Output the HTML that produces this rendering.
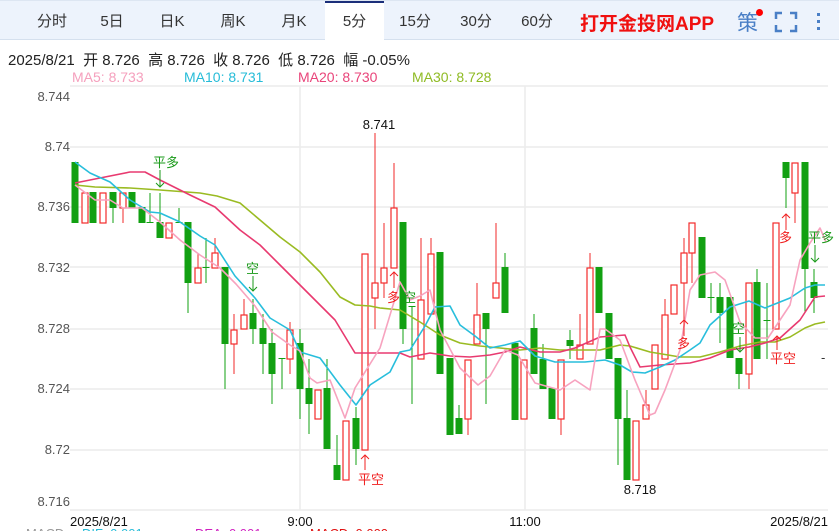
<!DOCTYPE html>
<html><head><meta charset="utf-8"><style>
*{margin:0;padding:0;box-sizing:border-box}
body{width:839px;height:531px;overflow:hidden;background:#fff;font-family:"Liberation Sans","Noto Sans CJK SC",sans-serif;position:relative}
.bar{position:absolute;left:0;top:0;width:839px;height:40px;background:#edf3fc;border-top:1px solid #dde6f2;border-bottom:1px solid #d5e0ee}
.tab{position:absolute;top:0;height:39px;line-height:42px;font-size:15px;color:#333;text-align:center}
.act{background:#fff;border-top:2px solid #1b2f7a;line-height:38px;height:40px}
.app{position:absolute;left:580px;top:8px;font-size:19px;font-weight:bold;color:#f01010}
.info{position:absolute;left:8px;top:49px;font-size:15px;color:#222;white-space:pre}
.ma{position:absolute;top:69px;font-size:14px}
svg{position:absolute;left:0;top:0}
</style></head><body>
<div class="bar">
<div class="tab" style="left:30px;width:44px">分时</div>
<div class="tab" style="left:90px;width:44px">5日</div>
<div class="tab" style="left:150px;width:44px">日K</div>
<div class="tab" style="left:211px;width:44px">周K</div>
<div class="tab" style="left:272px;width:44px">月K</div>
<div class="tab act" style="left:325px;width:59px">5分</div>
<div class="tab" style="left:393px;width:44px">15分</div>
<div class="tab" style="left:454px;width:44px">30分</div>
<div class="tab" style="left:515px;width:44px">60分</div>
<div class="app">打开金投网APP</div>
<div style="position:absolute;left:737px;top:6px;font-size:21px;color:#4a7fc6">策</div>
<div style="position:absolute;left:756px;top:8px;width:7px;height:7px;border-radius:50%;background:#f00"></div>
<svg width="839" height="40"><g fill="none" stroke="#4a7fc6" stroke-width="2.5"><path d="M776 18v-6h6M790 12h6v6M796 24v6h-6M782 30h-6v-6"/></g><g fill="#4a7fc6"><rect x="817" y="12" width="3" height="3"/><rect x="817" y="19" width="3" height="3"/><rect x="817" y="26" width="3" height="3"/></g></svg>
</div>
<div class="info">2025/8/21  开 8.726  高 8.726  收 8.726  低 8.726  幅 -0.05%</div>
<div class="ma" style="left:72px;color:#f5a0bd">MA5: 8.733</div>
<div class="ma" style="left:184px;color:#26bcd8">MA10: 8.731</div>
<div class="ma" style="left:298px;color:#e9447a">MA20: 8.730</div>
<div class="ma" style="left:412px;color:#8fbb24">MA30: 8.728</div>
<svg width="839" height="531">
<g stroke="#ececec" stroke-width="1.5">
<line x1="70" y1="86" x2="828" y2="86"/><line x1="70" y1="147" x2="828" y2="147"/><line x1="70" y1="207" x2="828" y2="207"/><line x1="70" y1="267" x2="828" y2="267"/><line x1="70" y1="329" x2="828" y2="329"/><line x1="70" y1="389" x2="828" y2="389"/><line x1="70" y1="450" x2="828" y2="450"/><line x1="70" y1="510" x2="828" y2="510"/>
<line x1="300" y1="86" x2="300" y2="510"/><line x1="525" y1="86" x2="525" y2="510"/>
</g>
<g font-size="13" fill="#555" text-anchor="end">
<text x="70" y="101">8.744</text><text x="70" y="151">8.74</text><text x="70" y="211">8.736</text><text x="70" y="272">8.732</text><text x="70" y="333">8.728</text><text x="70" y="393">8.724</text><text x="70" y="454">8.72</text><text x="70" y="506">8.716</text>
</g>
<g font-size="13" fill="#111">
<text x="70" y="526">2025/8/21</text><text x="300" y="526" text-anchor="middle">9:00</text><text x="525" y="526" text-anchor="middle">11:00</text><text x="828" y="526" text-anchor="end">2025/8/21</text>
<text x="379" y="129" text-anchor="middle">8.741</text><text x="640" y="494" text-anchor="middle">8.718</text>
</g>
<g font-size="13"><text x="26" y="538" fill="#999">MACD</text><text x="82" y="538" fill="#26bcd8">DIF: 0.001</text><text x="195" y="538" fill="#d020c0">DEA: 0.001</text><text x="310" y="538" fill="#e01010">MACD: 0.000</text></g>
<g id="c"></g>
<g fill="none" stroke-width="1.6" stroke-linejoin="round">
<polyline stroke="#9abb22" points="75,185 95,187 130,188 160,190 200,193 217,196 240,203 260,220 280,237 300,252 320,272 340,297 355,305 370,306 380,308 400,310 420,322 440,335 460,343 480,346 500,348 520,350 540,348 560,350 580,350 600,350 620,345 630,346 650,352 680,357 700,357 720,352 740,346 760,342 775,342 790,337 805,328 815,324 825,322"/>
<polyline stroke="#e83a70" points="75,183 100,178 130,172 145,172 160,180 190,195 215,207 240,230 260,245 280,265 300,285 320,305 335,320 355,353 380,353 400,353 410,357 430,353 450,356 470,357 490,355 505,352 520,347 540,352 560,352 575,348 600,337 625,335 630,347 640,367 660,365 690,363 710,358 730,350 749,347 765,343 780,338 800,320 815,297 825,296"/>
<polyline stroke="#28bedc" points="75,162 90,173 110,182 130,200 150,212 160,213 180,222 200,236 215,245 235,276 255,298 270,318 290,330 300,352 320,358 340,385 356,405 370,385 390,372 400,352 410,350 425,326 435,307 450,306 460,325 475,336 490,348 505,345 520,341 535,356 555,362 585,362 605,360 620,365 632,372 645,373 660,367 675,360 690,350 700,343 710,325 730,307 749,301 765,308 790,298 805,288 815,285 825,285"/>
<polyline stroke="#f7a3bf" points="75,185 95,200 110,200 123,208 142,208 160,222 180,240 200,255 220,268 236,284 255,306 272,332 290,345 300,351 310,378 317,383 330,380 345,418 355,388 380,348 400,282 410,300 420,296 430,290 440,330 460,368 478,385 490,376 505,350 518,355 535,383 560,390 575,380 590,390 600,329 605,329 620,340 635,380 650,415 655,413 665,390 680,350 690,290 700,275 715,272 725,280 740,322 755,338 768,338 790,305 800,260 810,243 820,228 826,242"/>
</g>
<g font-size="13">
<g fill="#1a9a1a" stroke="#1a9a1a"><text x="153" y="167" stroke="none">平多</text><line x1="160" y1="170" x2="160" y2="187"/><path d="M156 183l4 4 4-4" fill="none"/>
<text x="246" y="273" stroke="none">空</text><line x1="253" y1="276" x2="253" y2="291"/><path d="M249 287l4 4 4-4" fill="none"/>
<text x="403" y="302" stroke="none">空</text>
<text x="732" y="333" stroke="none">空</text><line x1="740" y1="337" x2="740" y2="352"/><path d="M736 348l4 4 4-4" fill="none"/>
<text x="808" y="242" stroke="none">平多</text><line x1="815" y1="245" x2="815" y2="262"/><path d="M811 258l4 4 4-4" fill="none"/></g>
<g fill="#f02020" stroke="#f02020"><text x="358" y="484" stroke="none">平空</text><line x1="365" y1="455" x2="365" y2="470"/><path d="M361 459l4-4 4 4" fill="none"/>
<text x="387" y="302" stroke="none">多</text><line x1="394" y1="272" x2="394" y2="288"/><path d="M390 276l4-4 4 4" fill="none"/>
<text x="677" y="348" stroke="none">多</text><line x1="684" y1="320" x2="684" y2="336"/><path d="M680 324l4-4 4 4" fill="none"/>
<text x="770" y="363" stroke="none">平空</text><line x1="777" y1="336" x2="777" y2="350"/><path d="M773 340l4-4 4 4" fill="none"/>
<text x="779" y="242" stroke="none">多</text><line x1="786" y1="214" x2="786" y2="230"/><path d="M782 218l4-4 4 4" fill="none"/></g>
<text x="821" y="362" fill="#333">-</text>
</g>
</svg>
<script>
var d=[[75,162,223,162,223,'g'],[85,193,223,193,223,'r'],[93,192,223,192,223,'g'],[103,193,223,193,223,'r'],[113,192,208,192,223,'g'],[123,193,208,193,223,'r'],[132,192,208,192,208,'g'],[142,207,223,207,223,'g'],[150,222,223,193,223,'g'],[160,222,238,193,238,'g'],[169,223,238,223,238,'r'],[179,222,223,208,223,'g'],[188,222,283,222,313,'g'],[198,268,283,253,283,'r'],[206,267,268,238,283,'g'],[215,253,268,238,268,'r'],[225,267,344,267,389,'g'],[234,330,344,314,374,'r'],[244,315,329,299,329,'r'],[253,313,329,299,344,'g'],[263,328,344,314,374,'g'],[272,343,374,329,404,'g'],[282,358,359,359,389,'g'],[290,330,359,322,374,'r'],[300,343,389,329,419,'g'],[309,388,404,359,434,'g'],[318,390,419,390,419,'r'],[327,388,449,359,449,'g'],[337,465,480,435,480,'g'],[346,421,480,421,480,'r'],[356,418,449,407,465,'g'],[365,254,450,254,450,'r'],[375,283,298,133,329,'r'],[384,268,283,223,298,'r'],[394,208,268,163,268,'r'],[403,222,329,222,344,'g'],[412,306,307,307,404,'g'],[421,300,359,238,359,'r'],[431,254,314,238,314,'r'],[440,252,374,252,374,'g'],[450,358,435,358,435,'g'],[459,418,434,405,434,'g'],[468,360,419,360,435,'r'],[477,315,344,283,344,'r'],[486,313,329,313,404,'g'],[496,283,298,223,298,'r'],[505,267,313,253,313,'g'],[515,343,420,343,420,'g'],[524,360,419,360,419,'r'],[534,328,374,314,374,'g'],[543,359,389,344,389,'g'],[552,388,419,388,419,'g'],[561,360,419,360,435,'r'],[570,340,346,330,359,'g'],[580,345,359,314,359,'r'],[590,268,344,253,344,'r'],[599,267,313,267,313,'g'],[609,313,359,313,359,'g'],[618,358,419,358,465,'g'],[627,418,480,390,480,'g'],[636,421,480,421,480,'r'],[646,405,419,390,419,'r'],[655,345,389,345,389,'r'],[665,315,359,299,359,'r'],[674,285,314,285,314,'r'],[684,253,283,238,320,'r'],[692,223,253,223,283,'r'],[702,237,298,237,298,'g'],[711,297,298,283,313,'g'],[720,297,313,283,343,'g'],[730,297,358,297,358,'g'],[739,358,374,358,389,'g'],[749,283,374,283,389,'r'],[757,282,359,269,359,'g'],[767,320,321,283,359,'g'],[776,223,329,223,329,'r'],[786,162,178,162,208,'g'],[795,163,193,163,223,'r'],[805,162,269,162,313,'g'],[814,282,298,269,313,'g']];
var s='';d.forEach(function(c){var x=c[0],col=c[5]=='g'?'#12a012':'#f22a2a';s+='<line x1="'+x+'" y1="'+c[3]+'" x2="'+x+'" y2="'+c[4]+'" stroke="'+col+'" stroke-width="1"/>';var h=Math.max(1,c[2]-c[1]);if(c[5]=='g')s+='<rect x="'+(x-3.5)+'" y="'+c[1]+'" width="7" height="'+h+'" fill="'+col+'"/>';else s+='<rect x="'+(x-3)+'" y="'+c[1]+'" width="6" height="'+h+'" fill="#fff" stroke="'+col+'" stroke-width="1.2"/>';});
document.getElementById('c').innerHTML=s;
</script>
</body></html>
